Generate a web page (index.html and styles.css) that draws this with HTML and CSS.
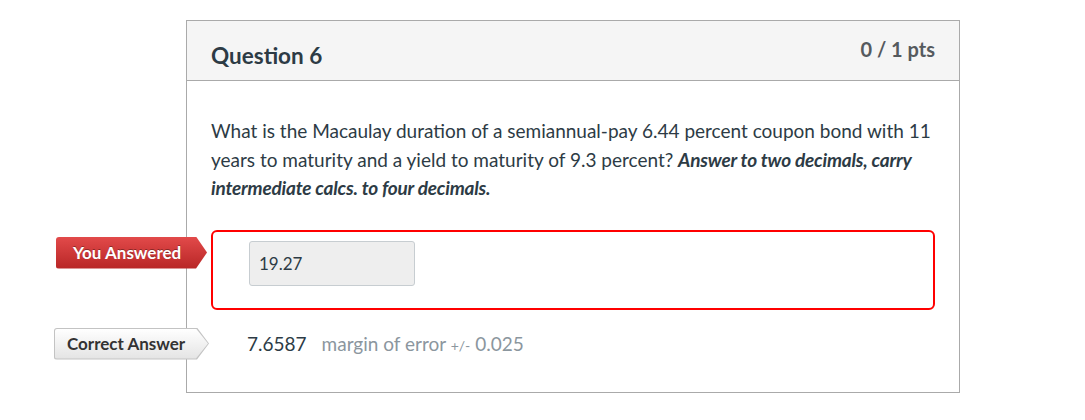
FILE: index.html
```html
<!DOCTYPE html>
<html>
<head>
<meta charset="utf-8">
<link rel="stylesheet" href="styles.css">
</head>
<body>
<div class="page">
  <div class="card">
    <div class="card-header">
      <h2 class="q-title">Question 6</h2>
      <div class="q-pts">0 / 1 pts</div>
    </div>
    <div class="card-body">
      <p class="q-text">What is the Macaulay duration of a semiannual-pay 6.44 percent coupon bond with 11 years to maturity and a yield to maturity of 9.3 percent? <strong><em>Answer to two decimals, carry intermediate calcs. to four decimals.</em></strong></p>
      <div class="answer wrong">
        <div class="badge badge-red"><span>You Answered</span></div>
        <div class="answer-input">19.27</div>
      </div>
      <div class="answer correct">
        <div class="badge badge-grey"><div class="badge-inner"><span>Correct Answer</span></div></div>
        <span class="correct-value">7.6587</span>
        <span class="margin">margin of error <span class="pm">+/-</span> 0.025</span>
      </div>
    </div>
  </div>
</div>
</body>
</html>
```
FILE: styles.css
```css
html, body {
  margin: 0;
  padding: 0;
  background: #fff;
  font-family: Lato, "Open Sans", "Liberation Sans", sans-serif;
  color: #2d3b45;
}
.page {
  padding: 20px 0 0 186px;
}
.card {
  width: 772px;
  height: 371px;
  border: 1px solid #aaaaaa;
  box-sizing: content-box;
}
.card-header {
  display: flex;
  justify-content: space-between;
  align-items: flex-start;
  background: #f5f5f5;
  border-bottom: 1px solid #aaaaaa;
  height: 59px;
  padding: 0 24px;
}
.q-title {
  margin: 21px 0 0 0;
  font-size: 22.5px;
  font-weight: 700;
  color: #2d3b45;
  line-height: 28px;
}
.q-pts {
  margin-top: 16px;
  font-size: 20px;
  font-weight: 700;
  color: #555a5e;
  line-height: 24px;
}
.card-body {
  padding: 36px 24px 0 24px;
}
.q-text {
  margin: 0;
  font-size: 19px;
  line-height: 28.5px;
  color: #2d3b45;
}
.q-text strong {
  font-weight: 700;
  letter-spacing: -0.2px;
}
.answer {
  position: relative;
}
.answer.wrong {
  margin-top: 27px;
  border: 2px solid #ff0000;
  border-radius: 6px;
  padding: 9px 0 0 36px;
  box-sizing: border-box;
  height: 80px;
}
.answer-input {
  width: 166px;
  height: 45px;
  box-sizing: border-box;
  background: #eeeeee;
  border: 1px solid #c7cdd1;
  border-radius: 3px;
  padding: 0 9px;
  font-size: 17px;
  line-height: 43px;
  color: #2d3b45;
}
.answer.correct {
  margin-top: 18px;
  height: 32px;
  display: flex;
  align-items: center;
  padding-left: 36px;
  font-size: 19px;
}
.correct-value {
  color: #2d3b45;
  margin-right: 15px;
}
.margin {
  color: #8b969e;
}
.pm {
  font-size: 14px;
}
.badge {
  position: absolute;
  display: flex;
  align-items: center;
  font-size: 17px;
  font-weight: 700;
  clip-path: polygon(0 0, calc(100% - 11px) 0, 100% 50%, calc(100% - 11px) 100%, 0 100%);
  border-radius: 3px 0 0 3px;
  box-sizing: border-box;
}
.badge-red {
  left: -157px;
  top: 5px;
  width: 151px;
  height: 32px;
  padding-left: 17px;
  color: #fff;
  background: linear-gradient(#e24a4a, #b82626);
  text-shadow: 0 -1px 0 rgba(0,0,0,0.35);
}
.badge-grey {
  left: -157px;
  top: 0;
  width: 155px;
  height: 32px;
  background: #c3c3c3;
  clip-path: polygon(0 0, calc(100% - 12px) 0, 100% 50%, calc(100% - 12px) 100%, 0 100%);
}
.badge-inner {
  position: absolute;
  left: 1px;
  top: 1px;
  right: 1px;
  bottom: 1px;
  display: flex;
  align-items: center;
  padding-left: 12px;
  color: #333;
  background: linear-gradient(#ffffff, #e4e4e4);
  border-radius: 2px 0 0 2px;
  clip-path: polygon(0 0, calc(100% - 12px) 0, 100% 50%, calc(100% - 12px) 100%, 0 100%);
}
```
